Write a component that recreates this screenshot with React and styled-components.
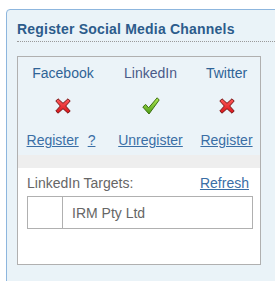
import React from "react";
import styled, { createGlobalStyle } from "styled-components";

const GlobalStyle = createGlobalStyle`
  html, body {
    margin: 0;
    padding: 0;
    background: #ffffff;
    overflow: hidden;
  }
  body {
    font-family: "Liberation Sans", Arial, sans-serif;
  }
`;

const Panel = styled.div`
  margin: 9px 0 0 6px;
  width: 300px;
  height: 300px;
  background: #eaf3f8;
  border: 1px solid #8db6de;
  border-top-left-radius: 4px;
  padding: 11px 0 0 10px;
  box-sizing: border-box;
`;

const Title = styled.h2`
  margin: 0;
  padding-bottom: 4px;
  font-size: 14px;
  line-height: 16px;
  font-weight: bold;
  letter-spacing: 0.2px;
  color: #2c5c8c;
  border-bottom: 1px dotted #9a9a9a;
`;

const Box = styled.div`
  margin-top: 14px;
  width: 244px;
  height: 209px;
  box-sizing: border-box;
  border: 1px solid #b0b0b0;
  background: #ffffff;
  display: flex;
  flex-direction: column;
`;

const Channels = styled.div`
  background: #ebf3f8;
  display: grid;
  grid-template-columns: 90px 85px 67px;
  padding: 8px 0 7px;
`;

const Channel = styled.div`
  display: flex;
  flex-direction: column;
  align-items: center;
`;

const Label = styled.div`
  font-size: 14px;
  line-height: 16px;
  color: ${({ $muted }) => ($muted ? "#4a5a88" : "#2f6396")};
`;

const IconCell = styled.div`
  height: 18px;
  margin: 16px 0 17px;
  display: flex;
  align-items: center;
  justify-content: center;
`;

const Links = styled.div`
  display: flex;
  gap: 9px;
  margin-left: ${({ $shift }) => $shift || 0}px;
`;

const Link = styled.a`
  font-size: 14px;
  line-height: 16px;
  color: #3a6ea5;
  text-decoration: underline;
  cursor: pointer;
`;

const Band = styled.div`
  height: 13px;
  background: #eeeeee;
`;

const Targets = styled.div`
  padding: 7px 7px 0 9px;
`;

const TargetsHead = styled.div`
  display: flex;
  justify-content: space-between;
  padding-right: 4px;
  margin-bottom: 5px;
`;

const Muted = styled.span`
  font-size: 14px;
  line-height: 16px;
  color: #666666;
`;

const Table = styled.div`
  display: grid;
  grid-template-columns: 34px 1fr;
  height: 33px;
  box-sizing: border-box;
  border: 1px solid #b0b0b0;
`;

const Cell = styled.div`
  display: flex;
  align-items: center;
  padding-left: ${({ $pad }) => $pad || 0}px;
  border-left: ${({ $divider }) => ($divider ? "1px solid #b0b0b0" : "none")};
  font-size: 14px;
  color: #666666;
`;

const Cross = () => (
  <svg width="16" height="16" viewBox="0 0 16 16">
    <defs>
      <linearGradient id="xg" x1="0" y1="0" x2="0" y2="1">
        <stop offset="0" stopColor="#ff5a5a" />
        <stop offset="1" stopColor="#d8141a" />
      </linearGradient>
    </defs>
    <polygon
      points="3,0.8 8,5.3 13,0.8 15.2,3 10.7,8 15.2,13 13,15.2 8,10.7 3,15.2 0.8,13 5.3,8 0.8,3"
      fill="url(#xg)"
      stroke="#7a1818"
      strokeWidth="1"
      strokeLinejoin="round"
    />
  </svg>
);

const Check = () => (
  <svg width="18" height="18" viewBox="0 0 18 18">
    <defs>
      <linearGradient id="cg" x1="0" y1="0" x2="0" y2="1">
        <stop offset="0" stopColor="#b4ec55" />
        <stop offset="1" stopColor="#4a9c14" />
      </linearGradient>
    </defs>
    <polygon
      points="0.8,10 3.6,7.4 6.6,10.8 15.2,0.8 17.2,3 7,17"
      fill="url(#cg)"
      stroke="#3d6e12"
      strokeWidth="1"
      strokeLinejoin="round"
    />
  </svg>
);

const channels = [
  { name: "Facebook", ok: false, links: ["Register", "?"], shift: -4 },
  { name: "LinkedIn", ok: true, links: ["Unregister"], muted: true },
  { name: "Twitter", ok: false, links: ["Register"] },
];

const App = () => (
  <>
    <GlobalStyle />
    <Panel>
      <Title>Register Social Media Channels</Title>
      <Box>
        <Channels>
          {channels.map((c) => (
            <Channel key={c.name}>
              <Label $muted={c.muted}>{c.name}</Label>
              <IconCell>{c.ok ? <Check /> : <Cross />}</IconCell>
              <Links $shift={c.shift}>
                {c.links.map((l) => (
                  <Link key={l}>{l}</Link>
                ))}
              </Links>
            </Channel>
          ))}
        </Channels>
        <Band />
        <Targets>
          <TargetsHead>
            <Muted>LinkedIn Targets:</Muted>
            <Link>Refresh</Link>
          </TargetsHead>
          <Table>
            <Cell />
            <Cell $divider $pad={9}>IRM Pty Ltd</Cell>
          </Table>
        </Targets>
      </Box>
    </Panel>
  </>
);

export default App;
